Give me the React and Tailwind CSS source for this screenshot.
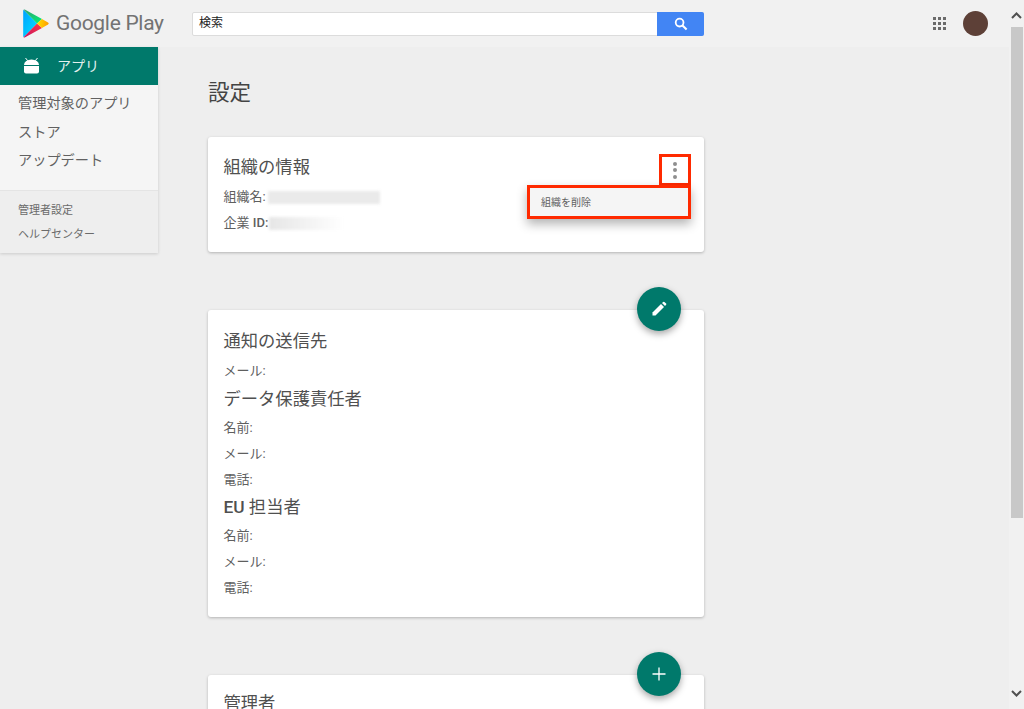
import React from 'react';

const font = '[font-family:Roboto,"Noto_Sans_CJK_JP",sans-serif]';

const PlayLogo = () => (
  <svg width="26" height="29" viewBox="0 0 26 29">
    <defs>
      <linearGradient id="playBlue" x1="0" y1="0" x2="1" y2="1">
        <stop offset="0" stopColor="#00a0ff" />
        <stop offset="1" stopColor="#00e3ff" />
      </linearGradient>
      <linearGradient id="playGreen" x1="0" y1="0" x2="1" y2="1">
        <stop offset="0" stopColor="#32a071" />
        <stop offset="1" stopColor="#00f076" />
      </linearGradient>
      <linearGradient id="playRed" x1="1" y1="0" x2="0" y2="1">
        <stop offset="0" stopColor="#ff3a44" />
        <stop offset="1" stopColor="#c31162" />
      </linearGradient>
      <linearGradient id="playYellow" x1="0" y1="0" x2="1" y2="0">
        <stop offset="0" stopColor="#ffe000" />
        <stop offset="1" stopColor="#ff9c00" />
      </linearGradient>
    </defs>
    <path d="M0.6 0.8 L14 14.5 L0.6 28.2 Q0.2 27.8 0.2 27 V2 Q0.2 1.2 0.6 0.8 Z" fill="url(#playBlue)" />
    <path d="M0.6 0.8 Q1.2 0.2 2.2 0.8 L19 10 L14 14.5 Z" fill="url(#playGreen)" />
    <path d="M0.6 28.2 L14 14.5 L19 19 L2.2 28.2 Q1.2 28.8 0.6 28.2 Z" fill="url(#playRed)" />
    <path d="M19 10 L25 13.4 Q26.4 14.5 25 15.6 L19 19 L14 14.5 Z" fill="url(#playYellow)" />
  </svg>
);

const Field = ({ children }) => <div className="text-[13px] leading-[26px] text-[#5f5f5f]">{children}</div>;

const Heading = ({ children, className = '' }) => (
  <div className={`text-[17.3px] leading-[28px] mb-[2px] text-[#505050] ${className}`}>{children}</div>
);

const Fab = ({ children, className }) => (
  <div className={`absolute right-[23px] w-[44px] h-[44px] rounded-full bg-[#00796b] flex items-center justify-center shadow-[0_3px_7px_rgba(0,0,0,0.35)] ${className}`}>
    {children}
  </div>
);

const Card = ({ children, className }) => (
  <div className={`relative w-[496px] bg-white rounded-[3px] shadow-[0_1px_3px_rgba(0,0,0,0.25)] ${className}`}>{children}</div>
);

export default function App() {
  return (
    <div className={`h-[709px] w-[1024px] overflow-hidden flex bg-[#eeeeee] ${font}`}>
      <div className="flex-1 flex flex-col min-w-0">
        <header className="h-[47px] bg-[#f1f1f1] flex items-center shrink-0">
          <div className="w-[192px] flex items-center pl-[23px] shrink-0">
            <PlayLogo />
            <span className="ml-[7px] text-[21px] tracking-[-0.3px] text-[#737373]">Google Play</span>
          </div>
          <div className="w-[512px] h-[24px] flex border border-[#dcdcdc] bg-white rounded-[2px]">
            <div className="flex-1 pl-[6px] text-[12px] leading-[21px] text-[#222]">検索</div>
            <div className="w-[47px] bg-[#4285f4] flex items-center justify-center rounded-r-[2px] -my-px -mr-px">
              <svg width="14" height="14" viewBox="0 0 14 14" fill="none" stroke="#fff" strokeWidth="1.8">
                <circle cx="5.6" cy="5.6" r="3.9" />
                <path d="M8.5 8.5 L12.6 12.6" strokeWidth="2.1" />
              </svg>
            </div>
          </div>
          <div className="ml-auto flex items-center pr-[21px]">
            <div className="grid grid-cols-3 gap-[1.5px] mr-[17px]">
              {[...Array(9)].map((_, i) => (
                <div key={i} className="w-[3.5px] h-[3.5px] bg-[#6b6b6b]" />
              ))}
            </div>
            <div className="w-[25px] h-[25px] rounded-full bg-[#5d4037]" />
          </div>
        </header>

        <div className="flex flex-1 min-h-0">
          <aside className="w-[158px] shrink-0">
            <div className="shadow-[0_1px_3px_rgba(0,0,0,0.15)]">
              <div className="h-[38px] bg-[#00796b] flex items-center pl-[23px]">
                <svg width="17" height="16" viewBox="0 0 17 16" fill="#fff">
                  <path d="M1 7 A7.5 5.5 0 0 1 16 7 Z" />
                  <path d="M1 8 H16 V13.5 Q16 15.5 14 15.5 H3 Q1 15.5 1 13.5 Z" />
                  <path d="M2.5 0 L4.8 2.8 M14.5 0 L12.2 2.8" stroke="#fff" strokeWidth="1" />
                </svg>
                <span className="ml-[17px] text-[14px] text-[#e3f0ee]">アプリ</span>
              </div>
              <div className="h-[106px] bg-[#f5f5f5] pt-[4px] pl-[18px] border-b border-[#e4e4e4]">
                {['管理対象のアプリ', 'ストア', 'アップデート'].map((t) => (
                  <div key={t} className="text-[14.2px] leading-[28.5px] text-[#616161]">{t}</div>
                ))}
              </div>
              <div className="h-[62px] bg-[#eeeeee] pt-[8px] pl-[18px]">
                {['管理者設定', 'ヘルプセンター'].map((t) => (
                  <div key={t} className="text-[11px] leading-[24px] text-[#6b6b6b]">{t}</div>
                ))}
              </div>
            </div>
          </aside>

          <main className="pl-[50px] pt-[31px] flex flex-col">
            <h1 className="text-[21.5px] leading-[30px] text-[#444] mb-[29px]">設定</h1>

            <Card className="h-[115px] shrink-0 pt-[16px] pl-[15.5px] pr-[16px]">
              <Heading>組織の情報</Heading>
              <div className="flex items-center mt-[3px]">
                <Field>組織名:</Field>
                <div className="ml-[2px] w-[112px] h-[13px] bg-[#eaeaea] blur-[1.5px]" />
              </div>
              <div className="flex items-center">
                <Field>企業 <span className="font-medium">ID:</span></Field>
                <div className="ml-[1px] w-[75px] h-[13px] bg-gradient-to-r from-[#e6e6e6] to-white blur-[1.5px]" />
              </div>
              <div className="absolute left-[451px] top-[17px] w-[32px] h-[32px] border-[3px] border-[#ff2a00] pr-[1px] flex flex-col items-center justify-center gap-[2.5px]">
                <div className="w-[4px] h-[4px] rounded-full bg-[#8f8f8f]" />
                <div className="w-[4px] h-[4px] rounded-full bg-[#8f8f8f]" />
                <div className="w-[4px] h-[4px] rounded-full bg-[#8f8f8f]" />
              </div>
              <div className="absolute left-[319px] top-[48px] w-[164px] h-[34px] border-[3px] border-[#ff2a00] bg-[#f5f5f5] pl-[11px] text-[10px] leading-[30px] text-[#5f5f5f] shadow-[0_5px_10px_rgba(0,0,0,0.3)]">
                組織を削除
              </div>
            </Card>

            <Card className="h-[307px] shrink-0 mt-[58px] pt-[17px] pl-[15.5px] pr-[16px]">
              <Fab className="top-[-23px]">
                <svg width="16" height="16" viewBox="0 0 16 16" fill="#fff">
                  <path d="M1.5 11.5 L10 3 L13 6 L4.5 14.5 L1.5 14.5 Z" />
                  <path d="M11 2 L12.2 0.9 Q12.8 0.4 13.4 0.9 L15.1 2.6 Q15.6 3.2 15.1 3.8 L14 5 Z" />
                </svg>
              </Fab>
              <Heading>通知の送信先</Heading>
              <div className="h-px" />
              <Field>メール:</Field>
              <Heading className="mt-px">データ保護責任者</Heading>
              <Field>名前:</Field>
              <Field>メール:</Field>
              <Field>電話:</Field>
              <Heading><span className="font-medium">EU</span> 担当者</Heading>
              <Field>名前:</Field>
              <Field>メール:</Field>
              <Field>電話:</Field>
            </Card>

            <Card className="h-[120px] shrink-0 mt-[58px] pt-[14px] pl-[15.5px] pr-[16px]">
              <Fab className="top-[-23px]">
                <svg width="14" height="14" viewBox="0 0 14 14" stroke="#fff" strokeWidth="1.3">
                  <path d="M7 0.5 V13.5 M0.5 7 H13.5" />
                </svg>
              </Fab>
              <Heading>管理者</Heading>
            </Card>
          </main>
        </div>
      </div>

      <div className="w-[15px] shrink-0 bg-[#f1f1f1] flex flex-col items-center relative">
        <svg className="mt-[12px]" width="11" height="7" viewBox="0 0 11 7" fill="none" stroke="#505050" strokeWidth="2">
          <path d="M1 6 L5.5 1.5 L10 6" />
        </svg>
        <div className="mt-[8px] w-[12px] h-[491px] bg-[#c8c8c8]" />
        <svg className="mt-auto mb-[12px]" width="11" height="7" viewBox="0 0 11 7" fill="none" stroke="#505050" strokeWidth="2">
          <path d="M1 1 L5.5 5.5 L10 1" />
        </svg>
      </div>
    </div>
  );
}
